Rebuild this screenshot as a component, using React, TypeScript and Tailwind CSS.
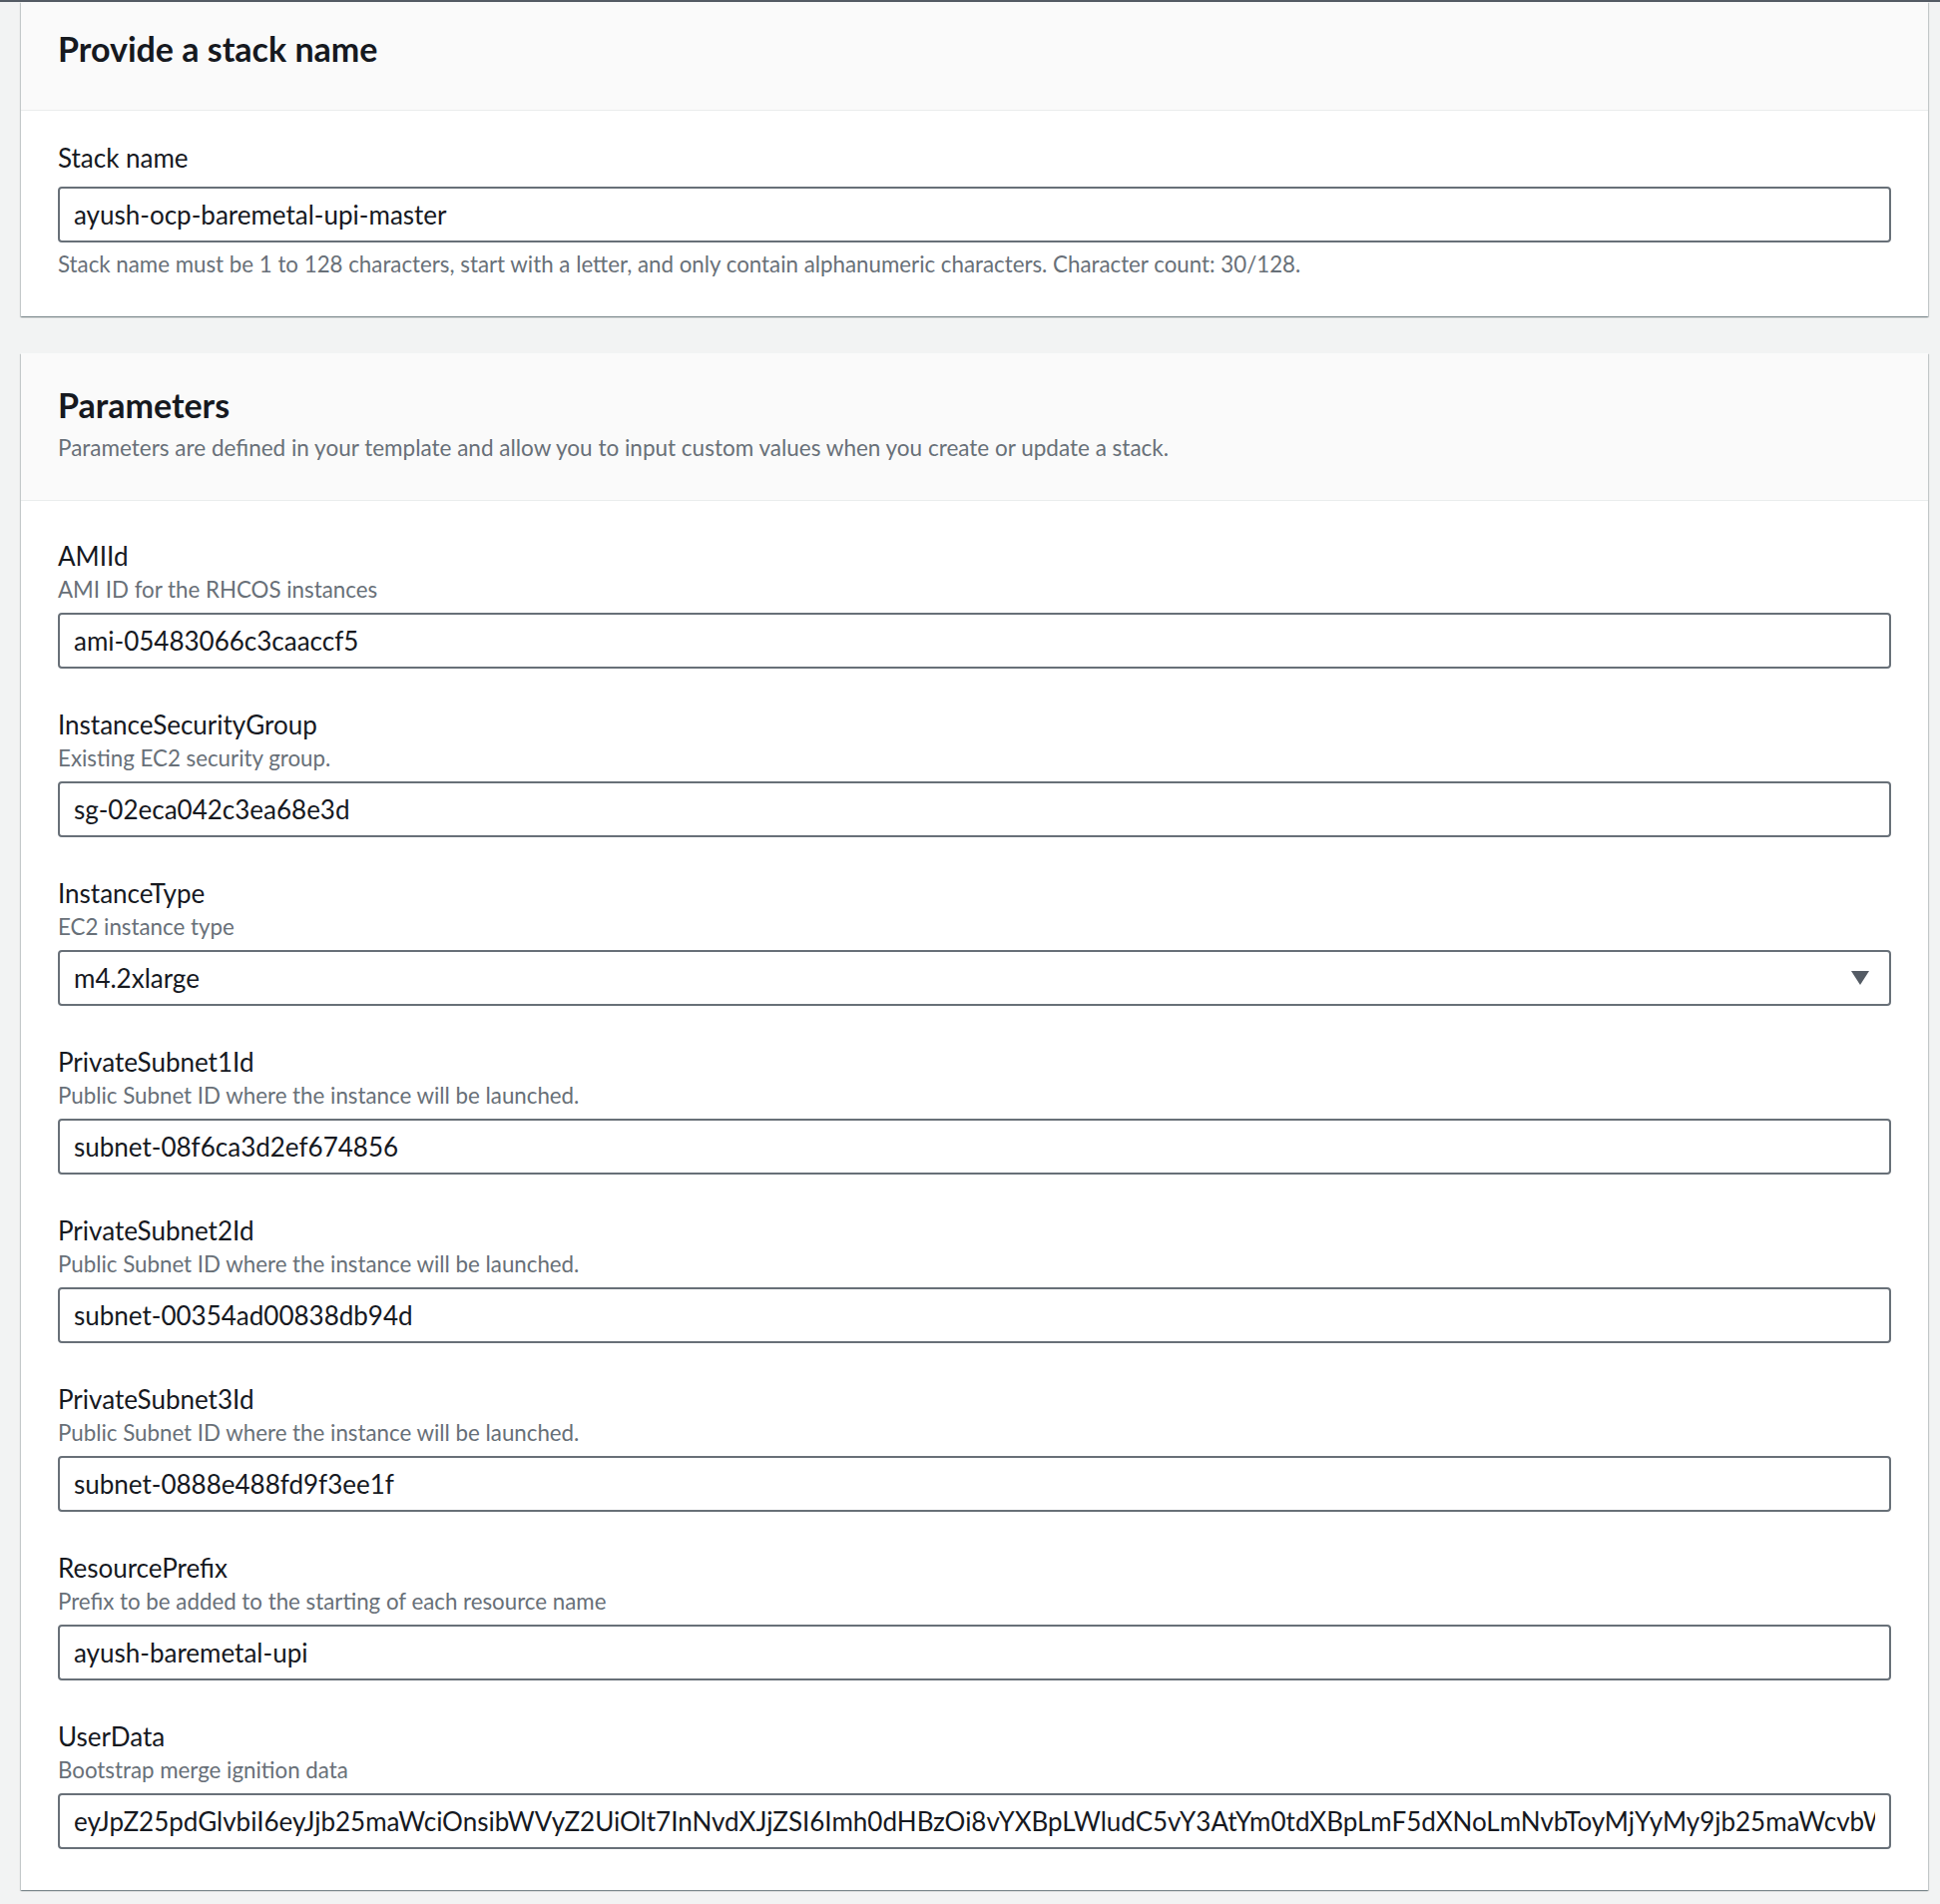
import React from "react";

const fields = [
  { name: "AMIId", desc: "AMI ID for the RHCOS instances", value: "ami-05483066c3caaccf5" },
  { name: "InstanceSecurityGroup", desc: "Existing EC2 security group.", value: "sg-02eca042c3ea68e3d" },
  { name: "InstanceType", desc: "EC2 instance type", value: "m4.2xlarge", select: true },
  { name: "PrivateSubnet1Id", desc: "Public Subnet ID where the instance will be launched.", value: "subnet-08f6ca3d2ef674856" },
  { name: "PrivateSubnet2Id", desc: "Public Subnet ID where the instance will be launched.", value: "subnet-00354ad00838db94d" },
  { name: "PrivateSubnet3Id", desc: "Public Subnet ID where the instance will be launched.", value: "subnet-0888e488fd9f3ee1f" },
  { name: "ResourcePrefix", desc: "Prefix to be added to the starting of each resource name", value: "ayush-baremetal-upi" },
  {
    name: "UserData",
    desc: "Bootstrap merge ignition data",
    value:
      "eyJpZ25pdGlvbiI6eyJjb25maWciOnsibWVyZ2UiOlt7InNvdXJjZSI6Imh0dHBzOi8vYXBpLWludC5vY3AtYm0tdXBpLmF5dXNoLmNvbToyMjYyMy9jb25maWcvbWFzdGVyIn1dfSwidmVyc2lvbiI6IjIuMi4wIn19",
  },
];

const card =
  "bg-white shadow-[0_1px_1px_0_rgba(0,28,36,0.3),1px_1px_1px_0_rgba(0,28,36,0.15),-1px_1px_1px_0_rgba(0,28,36,0.15)]";

function TextBox({ value }: { value: string }) {
  return (
    <input
      readOnly
      value={value}
      className="mt-2 block h-[56px] w-full rounded-[4px] border-2 border-[#687078] bg-white px-[14px] text-[26px] text-[#16191f] outline-none"
    />
  );
}

function SelectBox({ value }: { value: string }) {
  return (
    <div className="mt-2 flex h-[56px] w-full items-center justify-between rounded-[4px] border-2 border-[#687078] bg-white pl-[14px] pr-[20px]">
      <span className="text-[26px] text-[#16191f]">{value}</span>
      <svg width="18" height="14" viewBox="0 0 18 14">
        <polygon points="0,0 18,0 9,14" fill="#545b64" />
      </svg>
    </div>
  );
}

export default function App() {
  return (
    <div className="min-h-screen border-t-2 border-[#545b64] bg-[#f2f3f3] pl-[21px] pr-[12px] pb-[15px] font-['Lato',sans-serif]">
      {/* Stack name */}
      <section className={card}>
        <div className="border-b border-[#eaeded] bg-[#fafafa] px-[37px] pt-[27px] pb-[41px]">
          <h2 className="text-[34px] font-bold leading-[40px] text-[#16191f]">Provide a stack name</h2>
        </div>
        <div className="px-[37px] pt-[31px] pb-[37px]">
          <label className="block text-[26px] leading-[32px] text-[#16191f]">Stack name</label>
          <input
            readOnly
            value="ayush-ocp-baremetal-upi-master"
            className="mt-[13px] block h-[56px] w-full rounded-[4px] border-2 border-[#687078] bg-white px-[14px] text-[26px] text-[#16191f] outline-none"
          />
          <p className="mt-[7px] text-[22.3px] leading-[30px] text-[#687078]">
            Stack name must be 1 to 128 characters, start with a letter, and only contain alphanumeric characters. Character count: 30/128.
          </p>
        </div>
      </section>

      {/* Parameters */}
      <section className={`${card} mt-[37px]`}>
        <div className="border-b border-[#eaeded] bg-[#fafafa] px-[37px] pt-[32px] pb-[37px]">
          <h2 className="text-[34px] font-bold leading-[40px] text-[#16191f]">Parameters</h2>
          <p className="mt-2 text-[22.5px] leading-[30px] text-[#687078]">
            Parameters are defined in your template and allow you to input custom values when you create or update a stack.
          </p>
        </div>
        <div className="flex flex-col gap-[40px] px-[37px] pt-[39px] pb-[41px]">
          {fields.map((f) => (
            <div key={f.name}>
              <div className="text-[26px] leading-[32px] text-[#16191f]">{f.name}</div>
              <div className="mt-[3px] text-[22.3px] leading-[30px] text-[#687078]">{f.desc}</div>
              {f.select ? <SelectBox value={f.value} /> : <TextBox value={f.value} />}
            </div>
          ))}
        </div>
      </section>
    </div>
  );
}
